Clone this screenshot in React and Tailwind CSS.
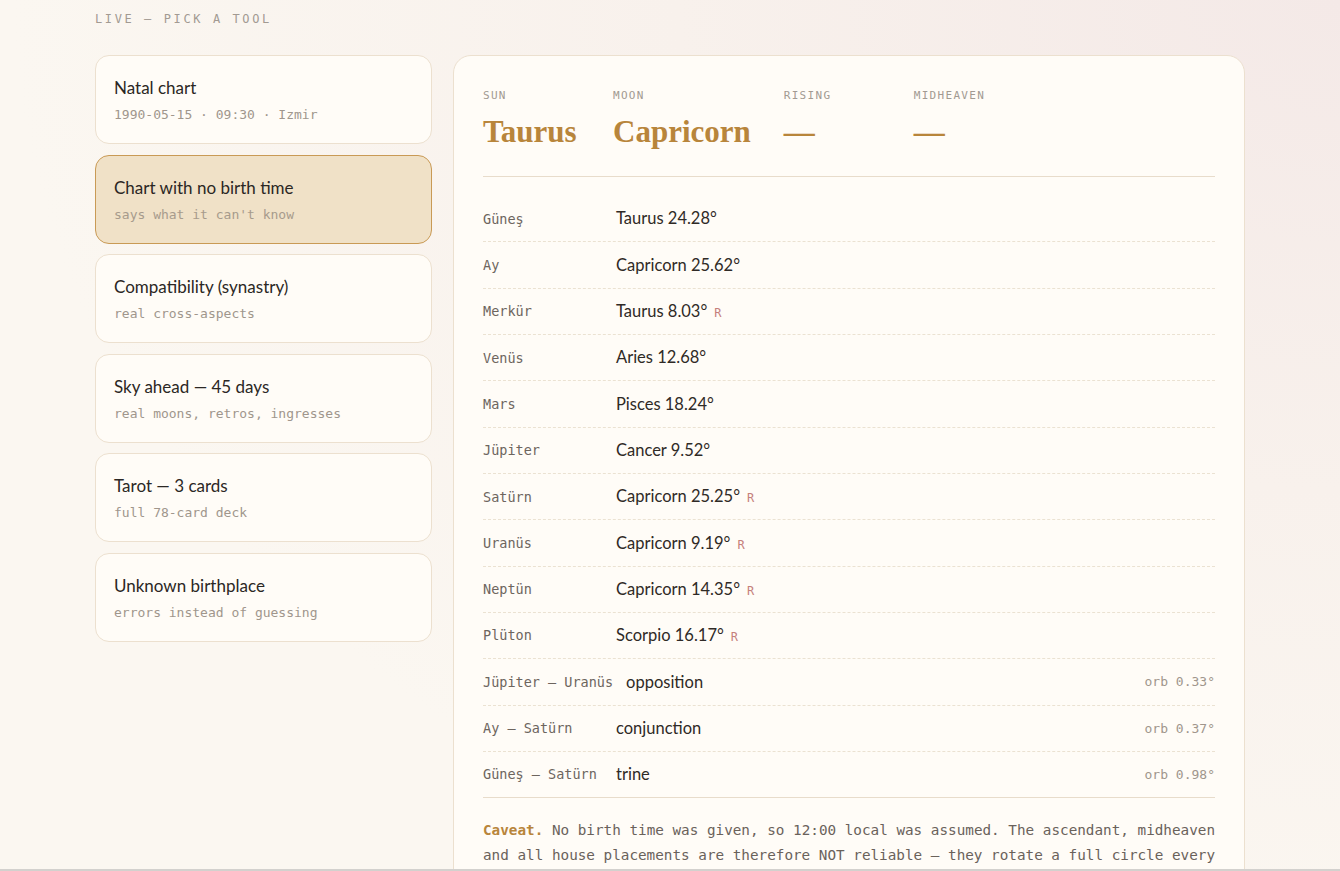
import React, { useState } from 'react';

const mono = "font-['DejaVu_Sans_Mono','Liberation_Mono',monospace]";
const sans = "font-['Lato','Noto_Sans',sans-serif]";
const serif = "font-['Liberation_Serif','DejaVu_Serif',serif]";

const tools = [
  { title: 'Natal chart', sub: '1990-05-15 · 09:30 · Izmir' },
  { title: 'Chart with no birth time', sub: "says what it can't know" },
  { title: 'Compatibility (synastry)', sub: 'real cross-aspects' },
  { title: 'Sky ahead — 45 days', sub: 'real moons, retros, ingresses' },
  { title: 'Tarot — 3 cards', sub: 'full 78-card deck' },
  { title: 'Unknown birthplace', sub: 'errors instead of guessing' },
];

const bigThree = [
  { label: 'SUN', value: 'Taurus' },
  { label: 'MOON', value: 'Capricorn' },
  { label: 'RISING', value: '—' },
  { label: 'MIDHEAVEN', value: '—' },
];

const planets = [
  { name: 'Güneş', pos: 'Taurus 24.28°' },
  { name: 'Ay', pos: 'Capricorn 25.62°' },
  { name: 'Merkür', pos: 'Taurus 8.03°', retro: true },
  { name: 'Venüs', pos: 'Aries 12.68°' },
  { name: 'Mars', pos: 'Pisces 18.24°' },
  { name: 'Jüpiter', pos: 'Cancer 9.52°' },
  { name: 'Satürn', pos: 'Capricorn 25.25°', retro: true },
  { name: 'Uranüs', pos: 'Capricorn 9.19°', retro: true },
  { name: 'Neptün', pos: 'Capricorn 14.35°', retro: true },
  { name: 'Plüton', pos: 'Scorpio 16.17°', retro: true },
];

const aspects = [
  { pair: 'Jüpiter – Uranüs', kind: 'opposition', orb: '0.33°' },
  { pair: 'Ay – Satürn', kind: 'conjunction', orb: '0.37°' },
  { pair: 'Güneş – Satürn', kind: 'trine', orb: '0.98°' },
];

const ToolCard = ({ tool, active, onClick }) => (
  <button
    onClick={onClick}
    className={`block w-full text-left rounded-[14px] border px-[18px] pt-[20px] pb-[19px] ${
      active ? 'bg-[#f0e1c7] border-[#c99a55]' : 'bg-[#fffcf7] border-[#ece0cf]'
    }`}
  >
    <div className={`${sans} text-[17px] leading-[24px] text-[#2b2724]`}>{tool.title}</div>
    <div className={`${mono} mt-[6px] text-[13px] leading-[18px] ${active ? 'text-[#a79b8c]' : 'text-[#a0968c]'}`}>
      {tool.sub}
    </div>
  </button>
);

const Row = ({ label, children, right, last }) => (
  <div
    className={`flex items-center h-[46.33px] gap-[13px] border-b ${
      last ? 'border-solid border-[#e8dccb]' : 'border-dashed border-[#ebe2d2]'
    }`}
  >
    <div className={`${mono} min-w-[120px] text-[13.5px] text-[#6d655e] whitespace-nowrap`}>{label}</div>
    <div className={`${sans} flex-1 text-[16.5px] text-[#2f2a26] flex items-baseline`}>{children}</div>
    {right && <div className={`${mono} text-[13px] text-[#a0968c]`}>{right}</div>}
  </div>
);

const App = () => {
  const [selected, setSelected] = useState(1);

  return (
    <div className="min-h-screen bg-[radial-gradient(ellipse_at_top_right,#f4e9e7_0%,#f8f1ec_35%,#fbf7f1_70%)] bg-[#faf5ee]">
      <div className="max-w-[1150px] mx-auto pt-[11px] pb-10">
        <div className={`${mono} text-[12px] leading-[16px] tracking-[2.6px] text-[#a29a92]`}>
          LIVE — PICK A TOOL
        </div>

        <div className="mt-[28px] flex items-start gap-[21px]">
          {/* tool list */}
          <div className="w-[337px] flex flex-col gap-[10.6px]">
            {tools.map((t, i) => (
              <ToolCard key={t.title} tool={t} active={selected === i} onClick={() => setSelected(i)} />
            ))}
          </div>

          {/* result panel */}
          <div className="flex-1 rounded-[18px] border border-[#ece0cf] bg-[#fffcf7] px-[29px] pt-[33px]">
            <div className="flex gap-[33px] pb-[26px] border-b border-[#e8dccb]">
              {bigThree.map((b) => (
                <div key={b.label} className="min-w-[97px]">
                  <div className={`${mono} text-[11px] leading-[14px] tracking-[1.3px] text-[#a29a92]`}>{b.label}</div>
                  <div className={`${serif} mt-[11px] text-[31px] leading-[36px] font-bold text-[#b8853b]`}>{b.value}</div>
                </div>
              ))}
            </div>

            <div className="mt-[19px]">
              {planets.map((p) => (
                <Row key={p.name} label={p.name}>
                  {p.pos}
                  {p.retro && <span className={`${mono} ml-[7px] text-[12px] text-[#c5807b]`}>R</span>}
                </Row>
              ))}
              {aspects.map((a, i) => (
                <Row key={a.pair} label={a.pair} right={`orb ${a.orb}`} last={i === aspects.length - 1}>
                  {a.kind}
                </Row>
              ))}
            </div>

            <p className={`${mono} mt-[20px] pb-[30px] text-[14.3px] leading-[25px] text-[#6a625b] text-justify`}>
              <span className="font-bold text-[#b8853b]">Caveat.</span> No birth time was given, so 12:00 local was
              assumed. The ascendant, midheaven and all house placements are therefore NOT reliable — they rotate a
              full circle every day. Planet signs stay valid, except the Moon, which moves about 13° a day and may sit
              in a neighbouring sign.
            </p>
          </div>
        </div>
      </div>
      <div className="fixed left-0 right-0 bottom-0 h-[2px] bg-[#d3d1ce]" />
    </div>
  );
};

export default App;
